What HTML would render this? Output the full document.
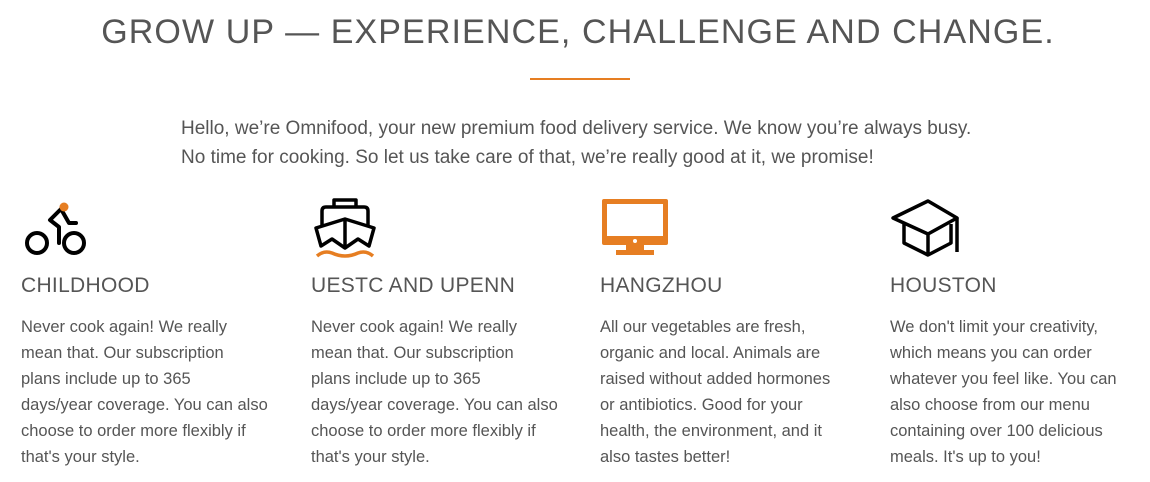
<!DOCTYPE html>
<html><head><style>
body{margin:0;width:1150px;height:482px;background:#fff;font-family:"Liberation Sans",sans-serif;color:#555;position:relative;overflow:hidden}
h1{position:absolute;top:9px;left:3px;width:1150px;text-align:center;margin:0;font-weight:normal;font-size:34px;letter-spacing:1.1px;color:#555;line-height:46px}
.line{position:absolute;left:530px;top:78px;width:100px;height:2px;background:#e67e22}
.intro{position:absolute;left:181px;top:114px;font-size:19px;line-height:29px;margin:0;width:850px}
.col{position:absolute;top:270px;width:280px;white-space:nowrap}
.col h3{margin:0;font-weight:normal;font-size:21px;line-height:32px;letter-spacing:.3px}
.col p{margin:12px 0 0;font-size:16.5px;line-height:26px}
svg{position:absolute}
</style></head><body>
<h1>GROW UP — EXPERIENCE, CHALLENGE AND CHANGE.</h1>
<div class="line"></div>
<p class="intro">Hello, we’re Omnifood, your new premium food delivery service. We know you’re always busy.<br>No time for cooking. So let us take care of that, we’re really good at it, we promise!</p>

<svg style="left:24px;top:200px" width="66" height="58" viewBox="0 0 66 58" fill="none" stroke="#000" stroke-width="4" stroke-linejoin="round" stroke-linecap="round">
<circle cx="13" cy="43" r="10"/><circle cx="50" cy="43" r="10"/>
<path d="M37 9 L26 20 L35 27 L35 43 M37 9 L45 23 L52 23"/>
<circle cx="40" cy="7" r="4.5" fill="#e67e22" stroke="none"/>
</svg>

<svg style="left:312px;top:196px" width="66" height="64" viewBox="0 0 66 64" fill="none" stroke="#000" stroke-width="3.5" stroke-linejoin="round">
<path d="M22 11 V4 H44 V11"/>
<path d="M10 30 V15 Q10 11 14 11 H52 Q56 11 56 15 V30"/>
<path d="M33 23 L4 32 L9 50 L20 43 L33 52 L46 43 L57 50 L62 32 Z"/>
<path d="M33 23 V52"/>
<path d="M5 60 Q12 54 20 57 Q33 63 46 57 Q54 54 61 60" stroke="#e67e22" stroke-width="3.5"/>
</svg>

<svg style="left:601px;top:198px" width="68" height="60" viewBox="0 0 68 60">
<rect x="1" y="1" width="66" height="46" rx="2" fill="#e67e22"/>
<rect x="6" y="6" width="56" height="32" fill="#fff"/>
<circle cx="34" cy="43" r="2" fill="#fff"/>
<rect x="25" y="47" width="18" height="6" fill="#e67e22"/>
<rect x="15" y="52" width="38" height="5" fill="#e67e22"/>
</svg>

<svg style="left:891px;top:198px" width="70" height="60" viewBox="0 0 70 60" fill="none" stroke="#000" stroke-width="3.5" stroke-linejoin="round">
<path d="M2 20 L37 3 L66 20 L37 36 Z"/>
<path d="M13 26 V45 L37 57 L60 45 V26"/>
<path d="M37 36 V57"/>
<path d="M66 20 V54"/>
</svg>

<div class="col" style="left:21px"><h3>CHILDHOOD</h3><p>Never cook again! We really<br>mean that. Our subscription<br>plans include up to 365<br>days/year coverage. You can also<br>choose to order more flexibly if<br>that's your style.</p></div>
<div class="col" style="left:311px"><h3>UESTC AND UPENN</h3><p>Never cook again! We really<br>mean that. Our subscription<br>plans include up to 365<br>days/year coverage. You can also<br>choose to order more flexibly if<br>that's your style.</p></div>
<div class="col" style="left:600px"><h3>HANGZHOU</h3><p>All our vegetables are fresh,<br>organic and local. Animals are<br>raised without added hormones<br>or antibiotics. Good for your<br>health, the environment, and it<br>also tastes better!</p></div>
<div class="col" style="left:890px"><h3>HOUSTON</h3><p>We don't limit your creativity,<br>which means you can order<br>whatever you feel like. You can<br>also choose from our menu<br>containing over 100 delicious<br>meals. It's up to you!</p></div>
</body></html>
